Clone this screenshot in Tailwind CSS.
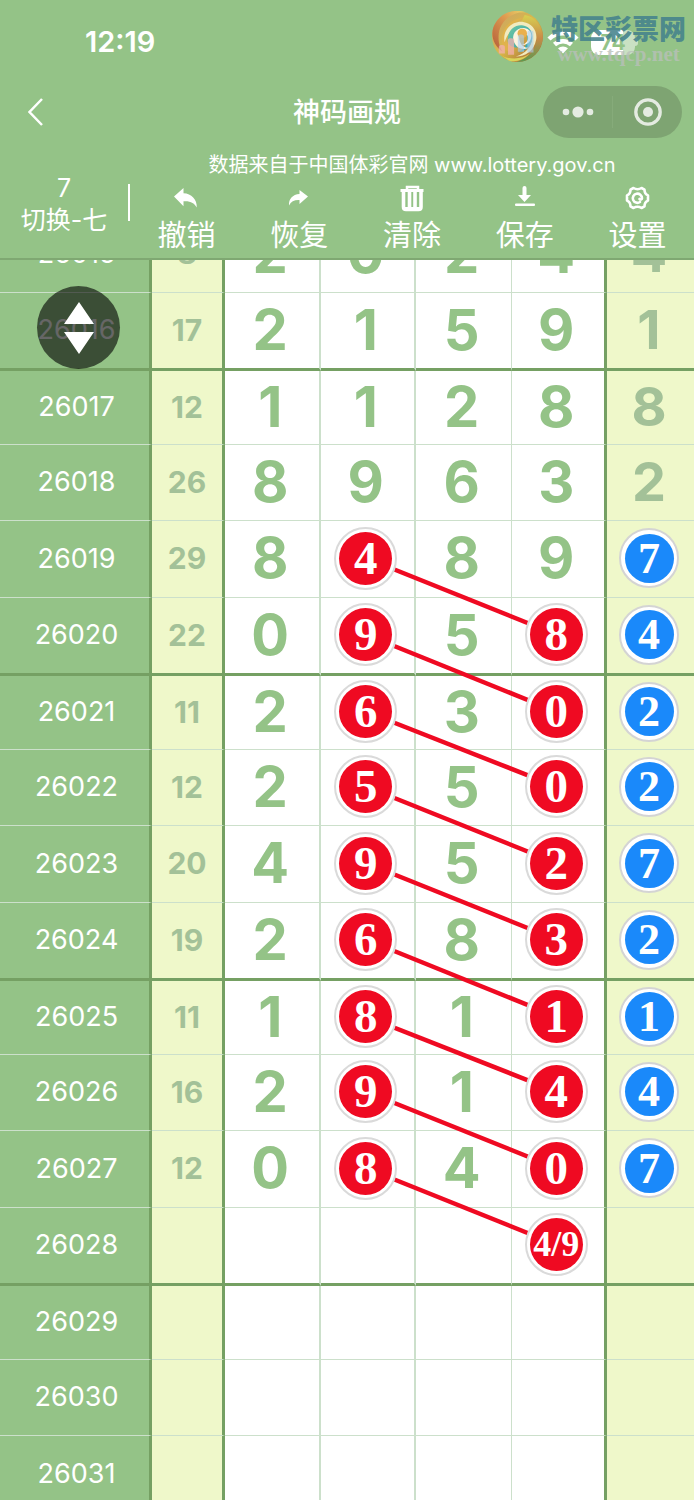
<!DOCTYPE html>
<html lang="zh-CN">

<head>
    <meta charset="UTF-8">
    <meta name="viewport" content="width=device-width, initial-scale=1.0">
    <title>神码画规</title>
    <script src="https://cdn.jsdelivr.net/npm/@tailwindcss/browser@4"></script>
</head>

<body class="h-screen flex flex-col overflow-hidden bg-white font-['Inter','Noto_Sans_CJK_SC',sans-serif]">
    <header class="relative z-20 shrink-0 bg-[#94c387] text-white border-b-2 border-[#7fa872]">
        <!-- Status bar -->
        <div class="relative h-21 flex items-center justify-between pl-[85px] pr-14">
            <span class="text-[29px] leading-9 font-semibold">12:19</span>
            <div class="flex items-center gap-3">
                <svg class="w-9 h-6" viewBox="0 0 36 24" fill="#fff">
                    <rect x="0" y="15" width="6" height="8" rx="2" />
                    <rect x="10" y="11" width="6" height="12" rx="2" />
                    <rect x="20" y="6" width="6" height="17" rx="2" />
                    <rect x="30" y="0" width="6" height="23" rx="2" />
                </svg>
                <svg class="w-8 h-6" viewBox="0 0 32 24" fill="none" stroke="#fff" stroke-width="4.500">
                    <path d="M2 9a20 20 0 0 1 28 0" />
                    <path d="M7.500 14.500a12.500 12.500 0 0 1 17 0" />
                    <path d="M16 23.500l-5-5.200a7.500 7.500 0 0 1 10 0z" fill="#fff" stroke="none" />
                </svg>
                <div class="flex items-center">
                    <div class="w-[44px] h-[25px] rounded-lg bg-linear-to-r from-white from-72% to-white/50 to-72% text-[#94c387] text-[21px] leading-[25px] font-bold text-center">74</div>
                    <div class="w-[3px] h-2 rounded-r-sm bg-white/50"></div>
                </div>
            </div>

            <!-- Site watermark -->
            <div class="absolute right-2 top-2 flex items-center gap-2">
                <svg class="w-[51px] h-[51px]" viewBox="0 0 150 150">
                    <defs>
                        <linearGradient id="ring" x1="0" y1="0" x2="1" y2="1">
                            <stop offset="0" stop-color="#c9a06a" />
                            <stop offset=".5" stop-color="#d9b84a" />
                            <stop offset="1" stop-color="#9c5630" />
                        </linearGradient>
                        <linearGradient id="flame" x1="0" y1="1" x2="1" y2="0">
                            <stop offset="0" stop-color="#b25a38" />
                            <stop offset=".6" stop-color="#dd9a50" />
                            <stop offset="1" stop-color="#ead66a" />
                        </linearGradient>
                        <linearGradient id="right" x1="0" y1="0" x2="0" y2="1">
                            <stop offset="0" stop-color="#d8d050" />
                            <stop offset=".5" stop-color="#c88a48" />
                            <stop offset="1" stop-color="#5a9a50" />
                        </linearGradient>
                        <linearGradient id="teal" x1="0" y1="0" x2="1" y2="1">
                            <stop offset="0" stop-color="#6fc6a0" />
                            <stop offset="1" stop-color="#2a9fb4" />
                        </linearGradient>
                    </defs>
                    <circle cx="75" cy="75" r="75" fill="url(#ring)" />
                    <path d="M100 4C60 0 24 30 20 66c-3 26 4 44 12 54C4 104-4 70 4 48 18 12 56-10 100 4z" fill="url(#flame)" />
                    <path d="M34 112C18 72 40 22 96 20 60 32 42 62 46 92c1 12 6 22 10 30z" fill="#e0b24c" />
                    <path d="M96 12c34 6 54 34 53 66-2 40-34 72-76 72 40-14 60-40 58-72-2-26-18-44-45-46z" fill="url(#right)" />
                    <path d="M37 92C30 52 62 28 92 32c26 4 42 26 38 52-6 34-32 50-60 50 30-10 48-30 48-54 0-20-14-34-34-34-22 0-38 18-47 46z" fill="#f1ebc0" />
                    <path d="M46 88C46 56 66 40 88 42c22 2 34 20 30 42-4 20-18 34-40 38 14-10 26-22 26-40 0-14-8-24-20-24-14 0-22 10-20 26 1 10 6 18 12 24-18 0-28-8-30-20z" fill="url(#teal)" />
                    <path d="M66 94C54 70 72 48 94 50c18 2 26 18 20 32-4 12-14 18-26 18 12-4 20-12 18-24-2-8-10-12-18-8-10 4-10 14-4 26 4 8 12 14 24 14-18 8-34 2-42-14z" fill="#fbf4e0" />
                    <circle cx="89" cy="66" r="14" fill="#eab04c" />
                    <path d="M30 132c24 12 60 10 80-6-16 18-40 26-60 20z" fill="#d9d45a" />
                    <!-- status bars showing through the emblem -->
                    <path d="M20 105q0-5 7-5h4q7 0 7 5v20H20zM47 85q0-5 7-5h4q7 0 7 5v44H47z" fill="#f3b0b0" fill-opacity=".75" />
                    <path d="M76 74q0-5 7-5h4q7 0 7 5v46H76zM104 62q0-5 7-5h4q7 0 7 5v60h-18z" fill="#a9cdf0" fill-opacity=".6" />
                </svg>
                <div class="text-center pt-1">
                    <p class="text-[27px] leading-8 font-black text-[#44828c]/90 font-['Noto_Sans_CJK_SC',sans-serif]">特区彩票网</p>
                    <p class="text-[21px] leading-5 font-bold text-[#b9c0b9]/80 font-['Liberation_Serif',serif]">www.tqcp.net</p>
                </div>
            </div>
        </div>

        <!-- Navigation bar -->
        <nav class="relative h-14 flex items-center justify-between pl-5 pr-3">
            <button class="p-2" aria-label="返回">
                <svg class="w-4 h-7" viewBox="0 0 16 28" fill="none" stroke="#fff" stroke-width="2.500">
                    <path d="M14 1L1.500 14 14 27" />
                </svg>
            </button>
            <h1 class="absolute inset-x-40 pt-[2px] text-center text-[27px] leading-9 font-medium">神码画规</h1>
            <div class="w-[139px] h-[52px] flex items-center rounded-full bg-[#7ea472]">
                <button class="flex-1 flex justify-center" aria-label="更多">
                    <svg class="w-8 h-3" viewBox="0 0 32 12" fill="#e4ebe1">
                        <circle cx="4" cy="6" r="3.300" />
                        <circle cx="16" cy="6" r="5.600" />
                        <circle cx="28" cy="6" r="3.300" />
                    </svg>
                </button>
                <span class="w-px h-8 bg-[#86ab7a]"></span>
                <button class="flex-1 flex justify-center" aria-label="关闭">
                    <svg class="w-7 h-7" viewBox="0 0 28 28">
                        <circle cx="14" cy="14" r="12.200" fill="none" stroke="#e4ebe1" stroke-width="3.300" />
                        <circle cx="14" cy="14" r="5" fill="#e4ebe1" />
                    </svg>
                </button>
            </div>
        </nav>

        <!-- Toolbar -->
        <div class="h-[118px] flex">
            <button class="w-32 pt-8 flex flex-col items-center text-[25px] leading-8">
                <span>7</span>
                <span>切换-七</span>
            </button>
            <span class="w-[2px] h-[37px] mt-11 bg-white"></span>
            <div class="flex-1 pt-[10px]">
                <p class="text-center text-[20px] leading-[30px]">数据来自于中国体彩官网 www.lottery.gov.cn</p>
                <div class="flex text-[29px] leading-10 pt-1">
                    <button class="flex-1 flex flex-col items-center gap-1">
                        <svg class="w-7 h-7" viewBox="0 0 28 28" fill="#fff">
                            <path d="M2 12.500L11.500 4v5.200c8 .3 13.500 6 13.300 14.300-2.300-4.500-6.300-6.800-13.300-6.300v5z" />
                        </svg>
                        <span>撤销</span>
                    </button>
                    <button class="flex-1 flex flex-col items-center gap-1">
                        <svg class="w-7 h-7" viewBox="0 0 28 28" fill="#fff">
                            <path d="M23 12.500L14.500 6v4C7.500 10.500 3.500 15 4 21.500c2-4 5.500-5.800 10.500-5.500v4z" />
                        </svg>
                        <span>恢复</span>
                    </button>
                    <button class="flex-1 flex flex-col items-center gap-1">
                        <svg class="w-7 h-7" viewBox="0 0 28 28" fill="none" stroke="#fff">
                            <path d="M9 5V3h11v2" stroke-width="2.500" />
                            <path d="M2.500 6.500h23" stroke-width="3" />
                            <path d="M5.500 8v15q0 2.500 2.500 2.500h12.500q2.500 0 2.500-2.500V8M11.500 8v15M17 8v15" stroke-width="3.600" />
                            <path d="M6 24.500h16.500" stroke-width="3" />
                        </svg>
                        <span>清除</span>
                    </button>
                    <button class="flex-1 flex flex-col items-center gap-1">
                        <svg class="w-7 h-7" viewBox="0 0 28 28" fill="#fff">
                            <path d="M11.500 4q0-2 2-2t2 2v7h4.500L13.500 18 7 11h4.500z" />
                            <rect x="4" y="19.500" width="20" height="2.500" rx="1" />
                        </svg>
                        <span>保存</span>
                    </button>
                    <button class="flex-1 flex flex-col items-center gap-1">
                        <svg class="w-7 h-7" viewBox="0 0 28 28" fill="none" stroke="#fff" stroke-width="2.600" stroke-linejoin="round" stroke-linecap="round">
                            <path d="M9.500 4q4 2.500 8 0l3 1.700q0 4.300 3.500 5.700v5.200q-3.500 1.400-3.500 5.700l-3 1.700q-4-2.500-8 0l-3-1.700q0-4.300-3.500-5.700v-5.200q3.500-1.400 3.500-5.700z" />
                            <path d="M16 18a4.600 4.600 0 1 1 2-3.800c0 1.300-1.500 1.800-2.500.8" />
                        </svg>
                        <span>设置</span>
                    </button>
                </div>
            </div>
        </div>
    </header>

    <main class="relative flex-1 overflow-hidden">
        <div id="board" class="relative -mt-11">
            <table class="w-full table-fixed border-separate border-spacing-0 text-center">
                <colgroup>
                    <col class="w-[152px]">
                    <col class="w-[73px]">
                    <col>
                    <col>
                    <col>
                    <col>
                    <col class="w-[87px]">
                </colgroup>
                <tbody id="rows"></tbody>
            </table>
            <svg id="lines" class="absolute inset-0 w-full h-full pointer-events-none" stroke="#ef0a22" stroke-width="4.500"></svg>
        </div>
        <button class="absolute z-20 left-[37px] top-[26px] w-[83px] h-[83px] rounded-full bg-black/60 flex items-center justify-center" aria-label="上下移动">
            <svg class="w-[30px] h-[52px]" viewBox="0 0 30 52" fill="#fff">
                <path d="M15 0l15 22H0zM15 52L0 30h30z" />
            </svg>
        </button>
    </main>

    <script>
        // [issue, sum, four digits, seventh digit]; "*" marks a circled digit
        const draws = [
            ['26015', '8', '2', '0', '2', '4', '4'],
            ['26016', '17', '2', '1', '5', '9', '1'],
            ['26017', '12', '1', '1', '2', '8', '8'],
            ['26018', '26', '8', '9', '6', '3', '2'],
            ['26019', '29', '8', '*4', '8', '9', '*7'],
            ['26020', '22', '0', '*9', '5', '*8', '*4'],
            ['26021', '11', '2', '*6', '3', '*0', '*2'],
            ['26022', '12', '2', '*5', '5', '*0', '*2'],
            ['26023', '20', '4', '*9', '5', '*2', '*7'],
            ['26024', '19', '2', '*6', '8', '*3', '*2'],
            ['26025', '11', '1', '*8', '1', '*1', '*1'],
            ['26026', '16', '2', '*9', '1', '*4', '*4'],
            ['26027', '12', '0', '*8', '4', '*0', '*7'],
            ['26028', '', '', '', '', '*4/9', ''],
            ['26029', '', '', '', '', '', ''],
            ['26030', '', '', '', '', '', ''],
            ['26031', '', '', '', '', '', ''],
        ];

        // a thick rule closes every fourth issue
        const rowHeights = ['h-[78px]', 'h-[74px]', 'h-[76px]', 'h-[77px]'];

        const cellStyles = [
            'pl-1 bg-[#94c387] text-white text-[27px] font-normal border-r-3 border-r-[#75a063]',
            'bg-[#eff8ca] text-[#a3c198] text-[30px] font-bold border-r-3 border-r-[#75a063]',
            'pr-[3px] bg-white text-[#94c387] text-[56px] font-bold border-r-2 border-r-[#cce0cb]',
            'pr-[3px] bg-white text-[#94c387] text-[56px] font-bold border-r-2 border-r-[#cce0cb]',
            'pr-[3px] bg-white text-[#94c387] text-[56px] font-bold border-r border-r-[#cce0cb]',
            'pr-[3px] bg-white text-[#94c387] text-[56px] font-bold border-r-3 border-r-[#75a063]',
            'pr-[3px] bg-[#eff8ca] text-[#a3c198] text-[54px] font-bold',
        ];

        function ball(text, col) {
            const serif = "relative z-10 mx-auto flex items-center justify-center rounded-full bg-white font-['Liberation_Serif',serif] font-bold text-white";
            if (col === 6) {
                return `<span class="${serif} w-[60px] h-[60px] border-2 border-[#d4d4d4] text-[44px]"><span class="w-[49px] h-[49px] leading-[49px] rounded-full bg-[#1a89fa]">${text}</span></span>`;
            }
            const size = text.length > 1 ? 'text-[36px]' : 'text-[47px]';
            return `<span class="${serif} w-[63px] h-[63px] border-2 border-[#dadada] ${size}" data-ball="${col}"><span class="w-[53px] h-[53px] leading-[53px] rounded-full bg-[#ef0a22]">${text}</span></span>`;
        }

        document.getElementById('rows').innerHTML = draws.map(draw => {
            const pos = Number(draw[0]) % 4;
            const rule = pos === 0 ? 'border-b-3 border-b-[#75a063]' : 'border-b border-b-[#cce0cb]';
            const cells = draw.map((value, col) => {
                const content = value[0] === '*' ? ball(value.slice(1), col) : value;
                const tag = col === 0 ? 'th' : 'td';
                return `<${tag} class="p-0 pb-[2px] leading-none ${cellStyles[col]} ${rule}">${content}</${tag}>`;
            }).join('');
            return `<tr class="${rowHeights[pos]}">${cells}</tr>`;
        }).join('');

        // join each ball in the second column to the one a row below in the fourth
        function drawLines() {
            const origin = document.getElementById('board').getBoundingClientRect();
            const centre = el => {
                const r = el.getBoundingClientRect();
                return [r.left + r.width / 2 - origin.left, r.top + r.height / 2 - origin.top];
            };
            const from = document.querySelectorAll('[data-ball="3"]');
            const to = document.querySelectorAll('[data-ball="5"]');
            document.getElementById('lines').innerHTML = [...from].map((el, i) => {
                const [x1, y1] = centre(el);
                const [x2, y2] = centre(to[i]);
                return `<line x1="${x1}" y1="${y1}" x2="${x2}" y2="${y2}" />`;
            }).join('');
        }

        new ResizeObserver(drawLines).observe(document.getElementById('board'));
        window.addEventListener('load', drawLines);
    </script>
</body>

</html>
